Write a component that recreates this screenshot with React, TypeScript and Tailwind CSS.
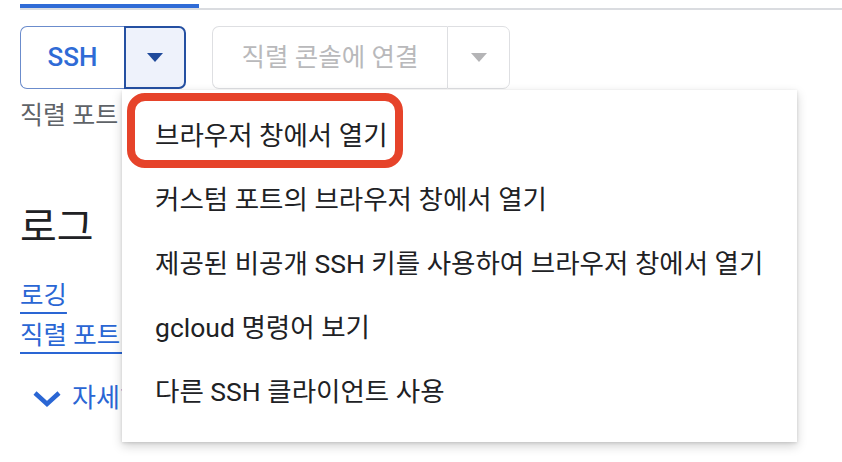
import React from 'react';

const menuItems = [
  '브라우저 창에서 열기',
  '커스텀 포트의 브라우저 창에서 열기',
  '제공된 비공개 SSH 키를 사용하여 브라우저 창에서 열기',
  'gcloud 명령어 보기',
  '다른 SSH 클라이언트 사용',
];

const Caret = ({ color }: { color: string }) => (
  <svg width="16" height="9" viewBox="0 0 16 9">
    <path d="M0 0 L16 0 L8 9 Z" fill={color} />
  </svg>
);

export default function App() {
  return (
    <div className="relative w-[842px] h-[462px] overflow-hidden bg-white font-['Roboto','Noto_Sans_CJK_KR',sans-serif]">
      <div className="pl-[20px]">
        {/* tab underline */}
        <div className="pt-[4px]">
          <div className="w-[179px] h-[4px] bg-[#2f6bd6]" />
          <div className="h-[2px] bg-[#dadce0]" />
        </div>

        {/* button row */}
        <div className="mt-[16px] flex gap-[26px] h-[63px]">
          <div className="flex h-full">
            <div className="w-[104px] flex items-center justify-center border-[1.5px] border-r-0 border-[#6b8ccc] rounded-l-[7px] text-[26px] font-medium text-[#2f6bd6]">
              SSH
            </div>
            <div className="w-[62px] flex items-center justify-center border-2 border-[#2550a2] bg-[#eef2fb] rounded-r-[7px]">
              <Caret color="#1f4a9b" />
            </div>
          </div>
          <div className="flex h-full">
            <div className="w-[235px] flex items-center justify-center border-[1.5px] border-r-0 border-[#dedfe2] rounded-l-[7px] text-[25.5px] text-[#b9b9bb]">
              직렬 콘솔에 연결
            </div>
            <div className="w-[63px] flex items-center justify-center border-[1.5px] border-[#dedfe2] rounded-r-[7px]">
              <Caret color="#b4b4b6" />
            </div>
          </div>
        </div>

        <div className="mt-[13px] text-[25px] leading-[28px] text-[#5f6368]">직렬 포트</div>

        <h2 className="mt-[76px] text-[40px] leading-[44px] text-[#202124]">로그</h2>

        <div className="mt-[25px] flex flex-col items-start text-[25.5px] leading-[40px] text-[#2a66d4]">
          <span className="underline decoration-2 underline-offset-[8px]">로깅</span>
          <span className="underline decoration-2 underline-offset-[8px]">직렬 포트 1</span>
        </div>

        <div className="mt-[24px] ml-[12px] flex items-center gap-[10px] text-[26px] text-[#2a66d4]">
          <svg width="30" height="18" viewBox="0 0 30 18">
            <path d="M3 3 L15 14 L27 3" fill="none" stroke="#2a66d4" strokeWidth="4.5" />
          </svg>
          <span>자세히</span>
        </div>
      </div>

      {/* dropdown menu */}
      <div className="absolute left-[122px] top-[90px] w-[675px] h-[352px] bg-white pt-[14px] shadow-[0_4px_10px_rgba(0,0,0,0.18),0_1px_3px_rgba(0,0,0,0.12)]">
        {menuItems.map((label) => (
          <div key={label} className="h-[64px] flex items-center pl-[33px] text-[26.5px] text-[#202124] whitespace-nowrap">
            {label}
          </div>
        ))}
        <div className="absolute left-[5px] top-[3px] w-[276px] h-[75px] border-[8px] border-[#e6432a] rounded-[18px]" />
      </div>
    </div>
  );
}
